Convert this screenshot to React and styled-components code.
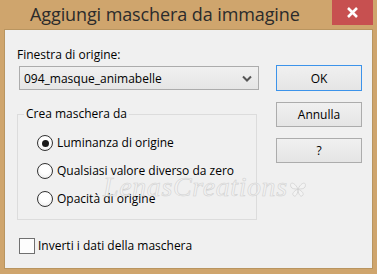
import React from 'react';
import styled, { createGlobalStyle } from 'styled-components';

const GlobalStyle = createGlobalStyle`
  html, body {
    margin: 0;
    padding: 0;
    background: #cfa56d;
  }
  body {
    font-family: "Open Sans", "Noto Sans", sans-serif;
  }
`;

const Window = styled.div`
  width: 377px;
  height: 274px;
  box-sizing: border-box;
  background: #cfa56d;
  padding: 0 4px 5px 4px;
  display: flex;
  flex-direction: column;
`;

const TitleBar = styled.div`
  height: 29px;
  display: flex;
  align-items: flex-start;
`;

const Title = styled.div`
  margin: 1px 0 0 26px;
  font-size: 18px;
  line-height: 26px;
  letter-spacing: -0.1px;
  color: #2b2b2b;
`;

const CloseButton = styled.div`
  margin-left: auto;
  width: 41px;
  height: 25px;
  background: #c75050;
  display: flex;
  align-items: center;
  justify-content: center;
`;

const Body = styled.div`
  flex: 1;
  background: #f0f0f0;
  border: 1px solid #b99560;
  display: flex;
  padding: 0 0 0 12px;
  position: relative;
  color: #000;
  font-size: 12px;
`;

const LeftColumn = styled.div`
  width: 242px;
  display: flex;
  flex-direction: column;
`;

const RightColumn = styled.div`
  margin-left: 17px;
  padding-top: 35px;
  display: flex;
  flex-direction: column;
  gap: 11px;
`;

const Label = styled.div`
  margin-top: 17px;
  line-height: 16px;
`;

const Select = styled.div`
  margin: 3px 0 0 2px;
  width: 240px;
  height: 24px;
  box-sizing: border-box;
  border: 1px solid #acacac;
  background: linear-gradient(#f0f0f0, #e5e5e5);
  display: flex;
  align-items: center;
  padding: 0 6px 0 4px;
  justify-content: space-between;
`;

const GroupBox = styled.fieldset`
  margin: 16px 0 0 0;
  width: 240px;
  height: 114px;
  box-sizing: border-box;
  border: 1px solid #dcdcdc;
  padding: 13px 0 0 19px;
  display: flex;
  flex-direction: column;
  gap: 12px;
`;

const Legend = styled.legend`
  margin-left: -13px;
  padding: 0 2px;
  line-height: 16px;
  font-size: 12px;
`;

const OptionRow = styled.label`
  display: flex;
  align-items: center;
  gap: 4px;
  height: 16px;
  line-height: 16px;
`;

const Radio = styled.span`
  width: 14px;
  height: 14px;
  border-radius: 50%;
  border: 1px solid #333;
  background: radial-gradient(circle at 50% 40%, #ffffff 40%, #e6e6e6 100%);
  display: flex;
  align-items: center;
  justify-content: center;
  &::after {
    content: '';
    width: 7px;
    height: 7px;
    border-radius: 50%;
    background: ${p => (p.$checked ? '#1a1a1a' : 'transparent')};
  }
`;

const CheckRow = styled.label`
  margin: 18px 0 0 2px;
  display: flex;
  align-items: center;
  gap: 3px;
  line-height: 16px;
`;

const CheckBox = styled.span`
  width: 16px;
  height: 16px;
  box-sizing: border-box;
  border: 1px solid #707070;
  background: #fdfdfd;
`;

const Button = styled.div`
  width: 86px;
  height: ${p => (p.$default ? '26px' : '25px')};
  box-sizing: border-box;
  border: 1px solid ${p => (p.$default ? '#3c93ea' : '#acacac')};
  background: linear-gradient(#f0f0f0, #e5e5e5);
  display: flex;
  align-items: center;
  justify-content: center;
  font-size: 12px;
`;

const Watermark = styled.div`
  position: absolute;
  left: 98px;
  top: 143px;
  font-family: "Liberation Serif", serif;
  font-style: italic;
  font-size: 28px;
  line-height: 28px;
  letter-spacing: 0.6px;
  color: #f3f3f3;
  -webkit-text-stroke: 0.6px #d2d2d2;
  pointer-events: none;
  display: flex;
  align-items: flex-end;
`;

const Chevron = () => (
  <svg width="10" height="7" viewBox="0 0 10 7">
    <path d="M1 1.5 L5 5.5 L9 1.5" fill="none" stroke="#555" strokeWidth="2" />
  </svg>
);

const CloseIcon = () => (
  <svg width="13" height="11" viewBox="0 0 13 11">
    <path d="M2 1 L11 10 M11 1 L2 10" stroke="#fff" strokeWidth="2.6" />
  </svg>
);

const Butterfly = () => (
  <svg width="20" height="22" viewBox="0 0 20 22">
    <path
      d="M10 10 C6 2 1 3 3 8 C4 10 7 10 10 10 C6 12 3 15 6 17 C8 18 10 14 10 10 C10 14 12 18 14 17 C17 15 14 12 10 10 C13 10 16 10 17 8 C19 3 14 2 10 10 Z"
      fill="#f3f3f3"
      stroke="#d2d2d2"
      strokeWidth="0.8"
    />
  </svg>
);

export default function App() {
  return (
    <>
      <GlobalStyle />
      <Window>
        <TitleBar>
          <Title>Aggiungi maschera da immagine</Title>
          <CloseButton>
            <CloseIcon />
          </CloseButton>
        </TitleBar>
        <Body>
          <LeftColumn>
            <Label>Finestra di origine:</Label>
            <Select>
              <span>094_masque_animabelle</span>
              <Chevron />
            </Select>
            <GroupBox>
              <Legend>Crea maschera da</Legend>
              <OptionRow>
                <Radio $checked />
                Luminanza di origine
              </OptionRow>
              <OptionRow>
                <Radio />
                Qualsiasi valore diverso da zero
              </OptionRow>
              <OptionRow>
                <Radio />
                Opacità di origine
              </OptionRow>
            </GroupBox>
            <CheckRow>
              <CheckBox />
              Inverti i dati della maschera
            </CheckRow>
          </LeftColumn>
          <RightColumn>
            <Button $default>OK</Button>
            <Button>Annulla</Button>
            <Button>?</Button>
          </RightColumn>
          <Watermark>
            LenasCreations
            <Butterfly />
          </Watermark>
        </Body>
      </Window>
    </>
  );
}
